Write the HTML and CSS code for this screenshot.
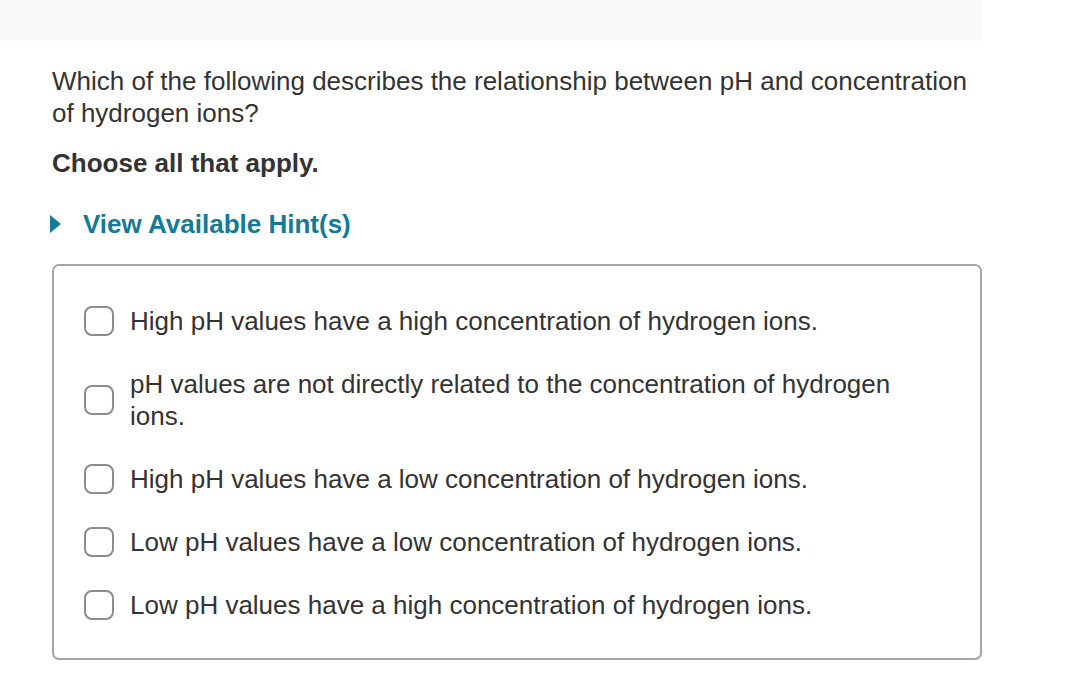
FILE: index.html
```html
<!DOCTYPE html>
<html>
<head>
<meta charset="utf-8">
<link rel="stylesheet" href="styles.css">
</head>
<body>
<div class="topbar"></div>
<main class="content">
  <p class="question">Which of the following describes the relationship between pH and concentration of hydrogen ions?</p>
  <p class="instruction">Choose all that apply.</p>
  <div class="hint">
    <svg class="hint-arrow" width="11" height="18" viewBox="0 0 11 18"><polygon points="0,0 11,9 0,18" fill="#167a98"/></svg>
    <span class="hint-text">View Available Hint(s)</span>
  </div>
  <div class="answers">
    <label class="option"><span class="box"></span><span class="option-text">High pH values have a high concentration of hydrogen ions.</span></label>
    <label class="option"><span class="box"></span><span class="option-text">pH values are not directly related to the concentration of hydrogen ions.</span></label>
    <label class="option"><span class="box"></span><span class="option-text">High pH values have a low concentration of hydrogen ions.</span></label>
    <label class="option"><span class="box"></span><span class="option-text">Low pH values have a low concentration of hydrogen ions.</span></label>
    <label class="option"><span class="box"></span><span class="option-text">Low pH values have a high concentration of hydrogen ions.</span></label>
  </div>
</main>
</body>
</html>
```
FILE: styles.css
```css
html, body {
  margin: 0;
  padding: 0;
  background: #ffffff;
}
body {
  font-family: "Liberation Sans", Arial, Helvetica, sans-serif;
  color: #333333;
  font-size: 26px;
}
.topbar {
  width: 982px;
  height: 41px;
  background: #f9f9f9;
}
.content {
  width: 930px;
  margin-left: 52px;
}
.question {
  margin: 24px 0 0 0;
  line-height: 32px;
}
.instruction {
  margin: 18px 0 0 0;
  line-height: 32px;
  font-weight: bold;
}
.hint {
  margin-top: 29px;
  display: flex;
  align-items: center;
  height: 32px;
  gap: 22px;
}
.hint-arrow {
  display: block;
  margin-left: -2px;
}
.hint-text {
  color: #137a98;
  font-weight: bold;
  line-height: 32px;
}
.answers {
  margin-top: 24px;
  border: 2px solid #a6a6a6;
  border-radius: 7px;
  padding: 39px 30px 37px 30px;
  display: flex;
  flex-direction: column;
  gap: 31px;
}
.option {
  display: flex;
  align-items: center;
  gap: 16px;
}
.box {
  flex: none;
  width: 26px;
  height: 26px;
  border: 2.5px solid #8c8c8c;
  border-radius: 8px;
  box-sizing: content-box;
}
.option-text {
  line-height: 32px;
  max-width: 790px;
}
```
